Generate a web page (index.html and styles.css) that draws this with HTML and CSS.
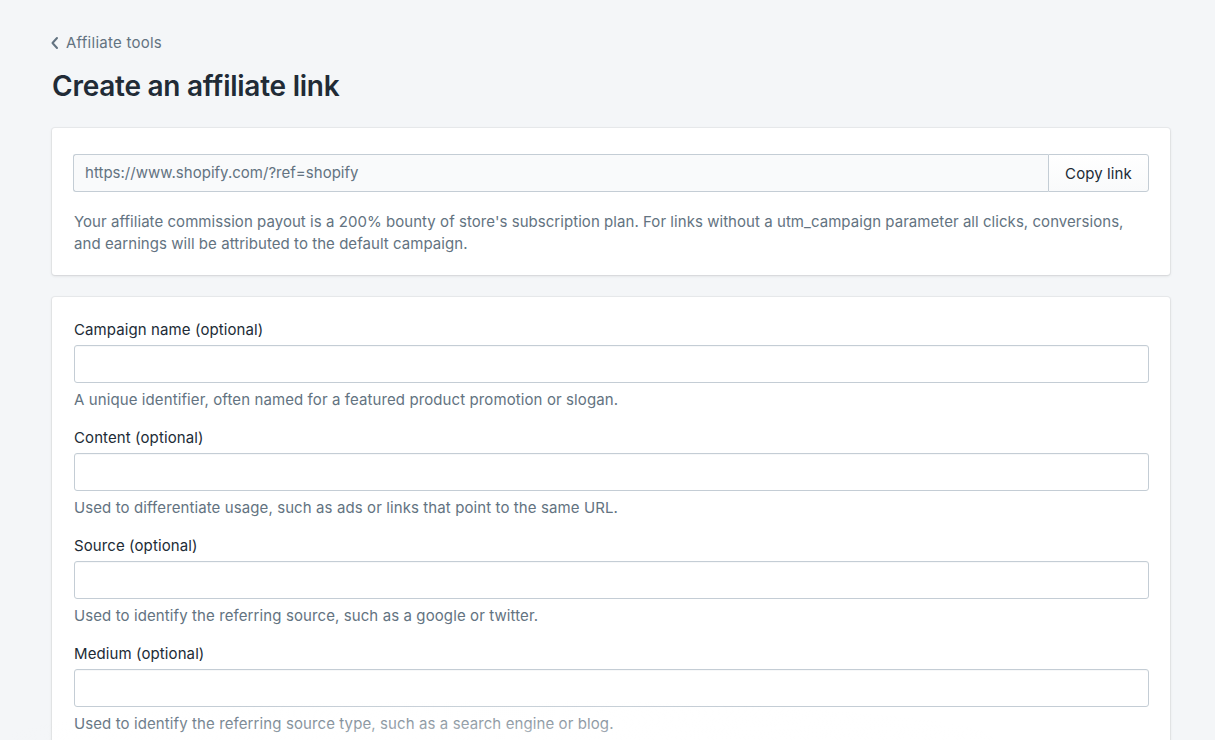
FILE: index.html
```html
<!DOCTYPE html>
<html lang="en">
<head>
<meta charset="utf-8">
<title>Create an affiliate link</title>
<link rel="stylesheet" href="styles.css">
</head>
<body>
<div class="page">
  <a class="back" href="#">
    <svg class="back-icon" width="10" height="14" viewBox="0 0 10 14"><path d="M7 2 L2.5 7 L7 12" fill="none" stroke="#637381" stroke-width="2" stroke-linecap="round" stroke-linejoin="round"/></svg>
    <span>Affiliate tools</span>
  </a>
  <h1 class="title">Create an affiliate link</h1>

  <section class="card card-link">
    <div class="connected">
      <div class="url-field">https://www.shopify.com/?ref=shopify</div>
      <button class="copy-btn">Copy link</button>
    </div>
    <p class="note">Your affiliate commission payout is a 200% bounty of store's subscription plan. For links without a utm_campaign parameter all clicks, conversions, and earnings will be attributed to the default campaign.</p>
  </section>

  <section class="card card-form">
    <div class="field">
      <label class="label">Campaign name (optional)</label>
      <div class="input"></div>
      <p class="help">A unique identifier, often named for a featured product promotion or slogan.</p>
    </div>
    <div class="field">
      <label class="label">Content (optional)</label>
      <div class="input"></div>
      <p class="help">Used to differentiate usage, such as ads or links that point to the same URL.</p>
    </div>
    <div class="field">
      <label class="label">Source (optional)</label>
      <div class="input"></div>
      <p class="help">Used to identify the referring source, such as a google or twitter.</p>
    </div>
    <div class="field">
      <label class="label">Medium (optional)</label>
      <div class="input"></div>
      <p class="help">Used to identify the referring source type, such as a search engine or blog.</p>
    </div>
  </section>
</div>
<div class="fade"></div>
</body>
</html>
```

FILE: styles.css
```css
* { box-sizing: border-box; }
html, body { margin: 0; padding: 0; }
body {
  background: #f4f6f8;
  font-family: Inter, "Noto Sans", "Liberation Sans", sans-serif;
  color: #212b36;
  font-size: 15px;
  line-height: 20px;
  overflow: hidden;
  height: 740px;
}
.page {
  margin-left: 52px;
  width: 1118px;
  padding-top: 33px;
}
.back {
  display: flex;
  align-items: center;
  gap: 6px;
  margin-left: -2px;
  color: #637381;
  text-decoration: none;
  font-size: 15px;
  line-height: 20px;
  letter-spacing: 0.25px;
}
.back-icon { display: block; }
.title {
  margin: 17px 0 0 0;
  font-size: 28px;
  line-height: 32px;
  font-weight: 600;
  letter-spacing: -0.25px;
  color: #212b36;
}
.card {
  background: #fff;
  border-radius: 3px;
  box-shadow: 0 0 0 1px rgba(63,63,68,0.05), 0 1px 3px 0 rgba(63,63,68,0.15);
}
.card-link {
  margin-top: 26px;
  padding: 26px 21px 20px 21px;
}
.connected {
  display: flex;
  height: 38px;
}
.url-field {
  flex: 1;
  background: #f9fafb;
  border: 1px solid #c4cdd5;
  border-right: none;
  border-radius: 3px 0 0 3px;
  padding: 0 11px;
  display: flex;
  align-items: center;
  color: #637381;
  font-size: 15px;
  letter-spacing: 0.02px;
}
.copy-btn {
  width: 101px;
  background: linear-gradient(#fff, #f9fafb);
  border: 1px solid #c4cdd5;
  border-radius: 0 3px 3px 0;
  font-family: inherit;
  font-size: 15px;
  color: #212b36;
  padding: 0;
  letter-spacing: 0.1px;
}
.note {
  margin: 19px 0 0 1px;
  color: #637381;
  font-size: 15px;
  line-height: 22px;
  letter-spacing: 0.05px;
}
.card-form {
  margin-top: 22px;
  padding: 23px 21px 20px 22px;
  height: 460px;
}
.field { margin-bottom: 18px; }
.label {
  display: block;
  font-size: 15px;
  line-height: 20px;
  color: #212b36;
  letter-spacing: 0.1px;
}
.input {
  margin-top: 5px;
  height: 38px;
  border: 1px solid #c4cdd5;
  border-radius: 3px;
  background: #fff;
  box-shadow: inset 0 1px 0 0 rgba(99,115,129,0.05);
}
.help {
  margin: 7px 0 0 0;
  color: #637381;
  font-size: 15px;
  line-height: 20px;
  letter-spacing: 0.1px;
}
.fade {
  position: fixed;
  left: 0;
  bottom: 0;
  width: 1000px;
  height: 40px;
  background: radial-gradient(ellipse at 50% 100%, rgba(255,255,255,0.55), rgba(255,255,255,0) 70%);
  pointer-events: none;
}
```
